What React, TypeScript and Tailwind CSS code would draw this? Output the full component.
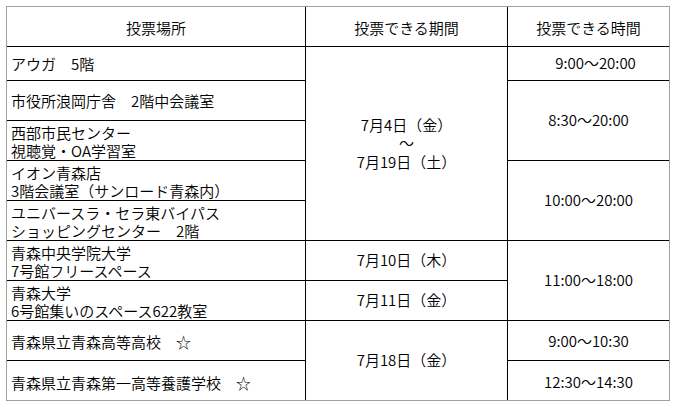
import React from 'react';

const font = { fontFamily: '"Noto Sans CJK JP", "Noto Sans", sans-serif' };

const Place: React.FC<{ text: string; className?: string }> = ({ text, className = '' }) => (
  <div className={`bg-white flex items-center pl-[4px] leading-[18px] ${className}`}>
    <p className="whitespace-pre">{text}</p>
  </div>
);

const Center: React.FC<{ children: React.ReactNode; className?: string }> = ({ children, className = '' }) => (
  <div className={`bg-white flex items-center justify-center text-center leading-[18.5px] ${className}`}>
    <p className="whitespace-pre">{children}</p>
  </div>
);

export default function App() {
  return (
    <div className="w-[677px] h-[410px] bg-white pt-[6px] pl-[6px]" style={font}>
      <div className="w-[664px] border border-[#a0a0a0] text-[15px] font-[350] text-black">
        <div className="grid grid-cols-[298px_201px_161px] grid-rows-[39px_33px_repeat(8,39px)] gap-px bg-black">
          {/* Header */}
          <Center className="col-start-1 row-start-1 pt-[3px]">投票場所</Center>
          <Center className="col-start-2 row-start-1 pt-[3px]">投票できる期間</Center>
          <Center className="col-start-3 row-start-1 pt-[3px]">投票できる時間</Center>

          {/* 投票場所 */}
          <Place className="col-start-1 row-start-2" text="アウガ　5階" />
          <Place className="col-start-1 row-start-3" text="市役所浪岡庁舎　2階中会議室" />
          <Place className="col-start-1 row-start-4 pt-[2px]" text={'西部市民センター\n視聴覚・OA学習室'} />
          <Place className="col-start-1 row-start-5 pt-[3px]" text={'イオン青森店\n3階会議室（サンロード青森内）'} />
          <Place className="col-start-1 row-start-6 pt-[3px]" text={'ユニバースラ・セラ東バイパス\nショッピングセンター　2階'} />
          <Place className="col-start-1 row-start-7 pt-[3px]" text={'青森中央学院大学\n7号館フリースペース'} />
          <Place className="col-start-1 row-start-8 pt-[3px]" text={'青森大学\n6号館集いのスペース622教室'} />
          <Place className="col-start-1 row-start-9 pt-[2px]" text="青森県立青森高等高校　☆" />
          <Place className="col-start-1 row-start-10 pt-[4px]" text="青森県立青森第一高等養護学校　☆" />

          {/* 投票できる期間 */}
          <Center className="col-start-2 row-start-2 row-span-5">{'7月4日（金）\n～\n7月19日（土）'}</Center>
          <Center className="col-start-2 row-start-7">7月10日（木）</Center>
          <Center className="col-start-2 row-start-8">7月11日（金）</Center>
          <Center className="col-start-2 row-start-9 row-span-2">7月18日（金）</Center>

          {/* 投票できる時間 */}
          <Center className="col-start-3 row-start-2 pl-[14px]">9:00～20:00</Center>
          <Center className="col-start-3 row-start-3 row-span-2">8:30～20:00</Center>
          <Center className="col-start-3 row-start-5 row-span-2">10:00～20:00</Center>
          <Center className="col-start-3 row-start-7 row-span-2">11:00～18:00</Center>
          <Center className="col-start-3 row-start-9 pt-[2px]">9:00～10:30</Center>
          <Center className="col-start-3 row-start-10 pt-[4px]">12:30～14:30</Center>
        </div>
      </div>
    </div>
  );
}
